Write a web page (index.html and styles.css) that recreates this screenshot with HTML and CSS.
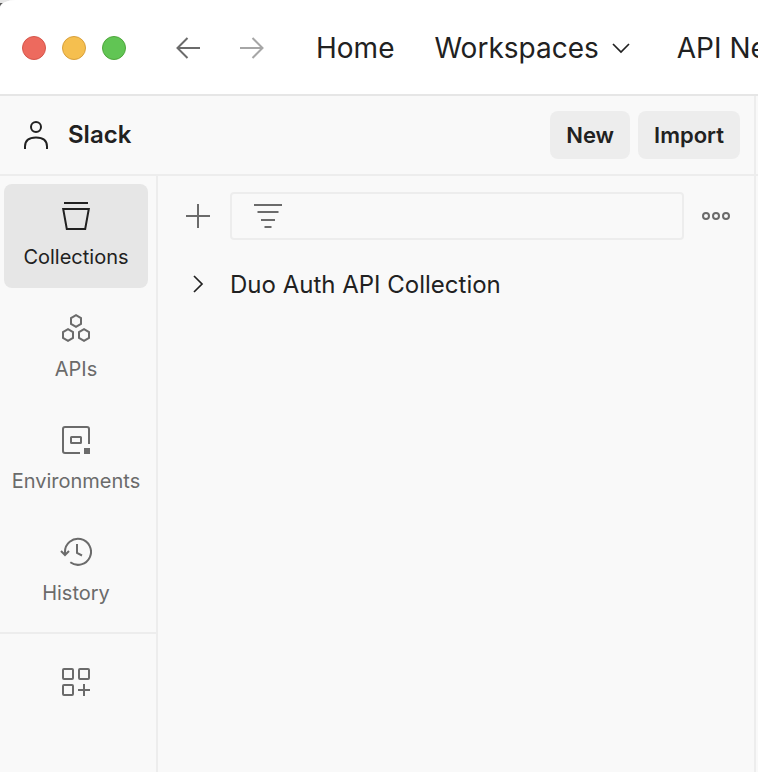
FILE: index.html
```html
<!DOCTYPE html>
<html lang="en">
<head>
<meta charset="utf-8">
<meta name="viewport" content="width=device-width, initial-scale=1">
<title>Slack</title>
<link rel="stylesheet" href="styles.css">
</head>
<body>
<div class="app">
  <header class="titlebar">
    <div class="lights">
      <button class="light light-close" type="button" aria-label="Close"></button>
      <button class="light light-min" type="button" aria-label="Minimize"></button>
      <button class="light light-max" type="button" aria-label="Zoom"></button>
    </div>
    <div class="history-nav">
      <button class="icon-btn" type="button" aria-label="Back">
        <svg class="icon" viewBox="0 0 32 32"><path d="M28 16H5.500M15.500 6L5.500 16l10 10"/></svg>
      </button>
      <button class="icon-btn icon-btn-off" type="button" aria-label="Forward">
        <svg class="icon" viewBox="0 0 32 32"><path d="M4 16h22.500M16.500 6l10 10-10 10"/></svg>
      </button>
    </div>
    <nav class="menu">
      <a href="#">Home</a>
      <a href="#">Workspaces
        <svg class="icon icon-thin" viewBox="0 0 32 32"><path d="M8 12l8 8 8-8"/></svg>
      </a>
      <a href="#">API Network</a>
    </nav>
  </header>

  <div class="body">
    <section class="workspace">
      <div class="workspace-head">
        <svg class="icon" viewBox="0 0 32 32"><circle cx="16" cy="8" r="5"/><path d="M5 30v-2.500C5 21.500 9 18.500 16 18.500s11 3 11 9V30"/></svg>
        <h1>Slack</h1>
        <button class="btn" type="button">New</button>
        <button class="btn" type="button">Import</button>
      </div>

      <div class="columns">
        <nav class="sidebar">
          <div class="group">
            <a class="tab tab-active" href="#">
              <svg class="icon" viewBox="0 0 32 32"><path d="M4 3h24M3.200 9h25.600L25.200 29H6.800z"/></svg>
              Collections
            </a>
            <a class="tab" href="#">
              <svg class="icon" viewBox="0 0 32 32"><path d="M16 3.200l5 2.900v5.800l-5 2.900-5-2.900V6.100zM8 17.200l5 2.900v5.800l-5 2.900-5-2.900v-5.800zM24 17.200l5 2.900v5.800l-5 2.900-5-2.900v-5.800z"/></svg>
              APIs
            </a>
            <a class="tab" href="#">
              <svg class="icon" viewBox="0 0 32 32"><path d="M29 20V5a2 2 0 0 0-2-2H5a2 2 0 0 0-2 2v22a2 2 0 0 0 2 2h15"/><rect x="11" y="13" width="10" height="6" rx="0.500"/><path class="solid" d="M24 24h6v6h-6z"/></svg>
              Environments
            </a>
            <a class="tab" href="#">
              <svg class="icon" viewBox="0 0 32 32"><path d="M10.300 26.300A13 13 0 1 0 5 16v3M1 15l4 4 4-4M17 8v9l5 2.500"/></svg>
              History
            </a>
          </div>
          <div class="group-extra">
            <button class="icon-btn" type="button" aria-label="Configure sidebar">
              <svg class="icon" viewBox="0 0 32 32"><rect x="3" y="3" width="10" height="10" rx="1"/><rect x="19" y="3" width="10" height="10" rx="1"/><rect x="3" y="19" width="10" height="10" rx="1"/><path d="M24 18v12M18 24h12"/></svg>
            </button>
          </div>
        </nav>

        <div class="panel">
          <div class="toolbar">
            <button class="icon-btn" type="button" aria-label="Create collection">
              <svg class="icon" viewBox="0 0 32 32"><path d="M16 4v24M4 16h24"/></svg>
            </button>
            <label class="filter">
              <svg class="icon" viewBox="0 0 32 32"><path d="M2 5h28M5.500 12h21M9 20h14M12.500 27h7"/></svg>
              <input type="text" aria-label="Filter collections">
            </label>
            <button class="icon-btn" type="button" aria-label="More actions">
              <svg class="icon" viewBox="0 0 32 32"><circle cx="6" cy="16" r="3"/><circle cx="16" cy="16" r="3"/><circle cx="26" cy="16" r="3"/></svg>
            </button>
          </div>
          <button class="tree-row" type="button">
            <svg class="icon icon-thin" viewBox="0 0 32 32"><path d="M12 8l8 8-8 8"/></svg>
            Duo Auth API Collection
          </button>
        </div>
      </div>
    </section>
    <main class="editor"><div class="editor-tabs"></div></main>
  </div>
</div>
</body>
</html>
```
FILE: styles.css
```css
* {
  box-sizing: border-box;
}

body {
  margin: 0;
  background: linear-gradient(#e6e6e6 3px, #5c5c5c 3px);
  color: #212121;
  font-family: Inter, "Liberation Sans", sans-serif;
  overflow: hidden;
}

button {
  margin: 0;
  padding: 0;
  border: 0;
  background: none;
  color: inherit;
  font: inherit;
}

a {
  color: inherit;
  text-decoration: none;
}

.app {
  display: flex;
  flex-direction: column;
  min-height: 100vh;
  overflow: hidden;
  background: #f9f9f9;
  border-top-left-radius: 16px 8px;
}

.icon {
  display: block;
  flex: none;
  width: 32px;
  height: 32px;
  fill: none;
  stroke: currentColor;
  stroke-width: 2;
}

.icon-thin {
  stroke-width: 1.700;
}

.icon .solid {
  fill: currentColor;
  stroke: none;
}

.icon-btn {
  flex: none;
  color: #6b6b6b;
}

.icon-btn-off {
  color: #a6a6a6;
}

.titlebar {
  display: flex;
  align-items: center;
  height: 96px;
  padding: 2px 0 0 22px;
  background: #fff;
  border-bottom: 2px solid #e6e6e6;
}

.lights {
  display: flex;
  gap: 16px;
}

.light {
  width: 24px;
  height: 24px;
  border: 1px solid;
  border-radius: 50%;
}

.light-close {
  background: #ed6a5e;
  border-color: #d5564b;
}

.light-min {
  background: #f5bf4f;
  border-color: #d8a03c;
}

.light-max {
  background: #61c554;
  border-color: #4fa73c;
}

.history-nav {
  display: flex;
  gap: 32px;
  margin-left: 46px;
}

.menu {
  display: flex;
  gap: 40px;
  margin-left: 48px;
  font-size: 28px;
  line-height: 40px;
  white-space: nowrap;
}

.menu a {
  display: flex;
  flex: none;
  align-items: center;
  gap: 6px;
}

.body {
  display: flex;
  flex: 1;
}

.workspace {
  display: flex;
  flex: 1;
  flex-direction: column;
  min-width: 0;
  border-right: 2px solid #ededed;
}

.editor {
  flex: none;
  width: 2px;
}

.editor-tabs {
  height: 80px;
  border-bottom: 2px solid #ededed;
}

.workspace-head {
  display: flex;
  align-items: center;
  gap: 8px;
  height: 80px;
  padding: 0 14px 0 20px;
  border-bottom: 2px solid #ededed;
}

.workspace-head h1 {
  flex: 1;
  margin: 0 0 0 8px;
  font-size: 24px;
  font-weight: 600;
  line-height: 32px;
}

.btn {
  height: 48px;
  padding: 0 16px;
  border-radius: 8px;
  background: #ededed;
  font-size: 22px;
  font-weight: 600;
}

.columns {
  display: flex;
  flex: 1;
}

.sidebar {
  flex: none;
  width: 158px;
  border-right: 2px solid #ededed;
}

.group {
  display: grid;
  gap: 8px;
  padding: 8px 8px 8px 4px;
  border-bottom: 2px solid #ededed;
}

.tab {
  display: flex;
  flex-direction: column;
  align-items: center;
  gap: 12px;
  height: 104px;
  padding-top: 16px;
  border-radius: 8px;
  color: #6b6b6b;
  font-size: 20px;
  line-height: 26px;
}

.tab-active {
  background: #e6e6e6;
  color: #212121;
}

.group-extra {
  display: flex;
  justify-content: center;
  padding: 32px 8px 32px 4px;
}

.panel {
  flex: 1;
  min-width: 0;
  padding: 16px 22px 16px 24px;
}

.toolbar {
  display: flex;
  align-items: center;
  gap: 16px;
}

.filter {
  display: flex;
  flex: 1;
  align-items: center;
  gap: 12px;
  min-width: 0;
  height: 48px;
  padding: 0 20px;
  border: 2px solid #ededed;
  border-radius: 4px;
  color: #6b6b6b;
}

.filter input {
  flex: 1;
  min-width: 0;
  border: 0;
  outline: 0;
  background: none;
  color: #212121;
  font: inherit;
  font-size: 24px;
}

.tree-row {
  display: flex;
  align-items: center;
  gap: 16px;
  width: 100%;
  height: 56px;
  margin-top: 16px;
  font-size: 24px;
  text-align: left;
}
```
